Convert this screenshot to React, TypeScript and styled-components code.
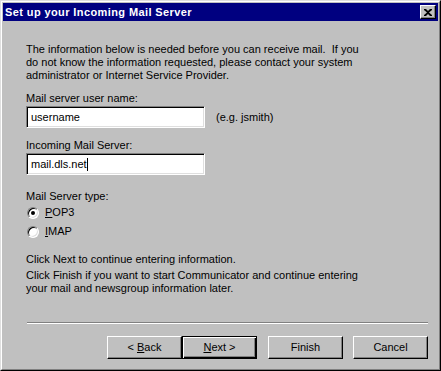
import React from 'react';
import styled, { createGlobalStyle } from 'styled-components';

const GlobalStyle = createGlobalStyle`
  html, body {
    margin: 0;
    padding: 0;
    background: #c0c0c0;
  }
  body {
    font-family: "Liberation Sans", Arial, sans-serif;
    font-size: 11px;
    color: #000;
  }
`;

const Window = styled.div`
  width: 441px;
  height: 371px;
  box-sizing: border-box;
  background: #c0c0c0;
  border-top: 1px solid #dfdfdf;
  border-left: 1px solid #dfdfdf;
  border-right: 1px solid #000;
  border-bottom: 1px solid #000;
  display: flex;
  flex-direction: column;
`;

const Frame = styled.div`
  flex: 1;
  display: flex;
  flex-direction: column;
  border-top: 1px solid #fff;
  border-left: 1px solid #fff;
  border-right: 1px solid #808080;
  border-bottom: 1px solid #808080;
  padding: 1px;
`;

const TitleBar = styled.div`
  height: 18px;
  background: #000080;
  display: flex;
  align-items: center;
  justify-content: space-between;
  padding: 0 2px;
`;

const Title = styled.span`
  color: #fff;
  font-weight: bold;
  font-size: 11px;
  letter-spacing: 0.4px;
`;

const CloseButton = styled.div`
  width: 16px;
  height: 14px;
  box-sizing: border-box;
  background: #c0c0c0;
  border-top: 1px solid #fff;
  border-left: 1px solid #fff;
  border-right: 1px solid #000;
  border-bottom: 1px solid #000;
  box-shadow: inset -1px -1px 0 #808080;
  display: flex;
  align-items: center;
  justify-content: center;
`;

const Body = styled.div`
  flex: 1;
  display: flex;
  flex-direction: column;
  padding: 22px 10px 0 23px;
  line-height: 13px;
`;

const Paragraph = styled.p<{ $top?: number }>`
  margin: ${(p) => p.$top ?? 0}px 0 0 0;
  white-space: nowrap;
`;

const Label = styled.div<{ $top: number }>`
  margin-top: ${(p) => p.$top}px;
`;

const FieldRow = styled.div`
  display: flex;
  align-items: center;
  gap: 11px;
  margin-top: 1px;
`;

const Field = styled.div`
  width: 179px;
  height: 22px;
  box-sizing: border-box;
  background: #fff;
  border-top: 1px solid #808080;
  border-left: 1px solid #808080;
  border-right: 1px solid #fff;
  border-bottom: 1px solid #fff;
  box-shadow: inset 1px 1px 0 #000, inset -1px -1px 0 #dfdfdf;
  padding: 4px 3px 0 4px;
  white-space: nowrap;
  display: flex;
  align-items: flex-start;
`;

const Caret = styled.span`
  display: inline-block;
  width: 1px;
  height: 13px;
  background: #000;
`;

const RadioRow = styled.div`
  display: flex;
  align-items: center;
  height: 19px;
  gap: 6px;
`;

const RadioCircle = styled.span<{ $checked?: boolean }>`
  width: 12px;
  height: 12px;
  box-sizing: border-box;
  border-radius: 50%;
  background: #fff;
  border: 1px solid;
  border-color: #808080 #fff #fff #808080;
  box-shadow: inset 1px 1px 0 #000, inset -1px -1px 0 #dfdfdf;
  display: flex;
  align-items: center;
  justify-content: center;
  margin-left: 1px;

  &::after {
    content: '';
    width: 4px;
    height: 4px;
    border-radius: 50%;
    background: ${(p) => (p.$checked ? '#000' : 'transparent')};
  }
`;

const Separator = styled.div`
  margin-top: 27px;
  margin-left: 1px;
  height: 0;
  border-top: 1px solid #808080;
  border-bottom: 1px solid #fff;
`;

const ButtonBar = styled.div`
  display: flex;
  justify-content: flex-end;
  margin-top: 12px;
`;

const Button = styled.div<{ $default?: boolean; $gap?: number }>`
  width: 75px;
  height: 23px;
  box-sizing: border-box;
  margin-left: ${(p) => p.$gap ?? 0}px;
  background: #c0c0c0;
  display: flex;
  align-items: center;
  justify-content: center;
  border: 1px solid;
  border-color: ${(p) => (p.$default ? '#000' : '#fff #000 #000 #fff')};
  box-shadow: ${(p) =>
    p.$default
      ? 'inset 1px 1px 0 #fff, inset -1px -1px 0 #000, inset -2px -2px 0 #808080'
      : 'inset -1px -1px 0 #808080'};
`;

const U = styled.span`
  text-decoration: underline;
`;

export default function App() {
  return (
    <>
      <GlobalStyle />
      <Window>
        <Frame>
          <TitleBar>
            <Title>Set up your Incoming Mail Server</Title>
            <CloseButton>
              <svg width="8" height="7" viewBox="0 0 8 7">
                <path d="M0 0h2l2 2 2-2h2v1L5 3.5 8 6v1H6L4 5 2 7H0V6l3-2.5L0 1z" fill="#000" />
              </svg>
            </CloseButton>
          </TitleBar>
          <Body>
            <Paragraph>
              The information below is needed before you can receive mail.&nbsp; If you
              <br />
              do not know the information requested, please contact your system
              <br />
              administrator or Internet Service Provider.
            </Paragraph>
            <Label $top={10}>Mail server user name:</Label>
            <FieldRow>
              <Field>username</Field>
              <span>(e.g. jsmith)</span>
            </FieldRow>
            <Label $top={11}>Incoming Mail Server:</Label>
            <FieldRow>
              <Field>
                mail.dls.net
                <Caret />
              </Field>
            </FieldRow>
            <Label $top={15}>Mail Server type:</Label>
            <RadioRow>
              <RadioCircle $checked />
              <span>
                <U>P</U>OP3
              </span>
            </RadioRow>
            <RadioRow>
              <RadioCircle />
              <span>
                <U>I</U>MAP
              </span>
            </RadioRow>
            <Paragraph $top={12}>Click Next to continue entering information.</Paragraph>
            <Paragraph $top={3}>
              Click Finish if you want to start Communicator and continue entering
              <br />
              your mail and newsgroup information later.
            </Paragraph>
            <Separator />
            <ButtonBar>
              <Button>
                &lt;&nbsp;<U>B</U>ack
              </Button>
              <Button $default>
                <U>N</U>ext &gt;
              </Button>
              <Button $gap={11}>Finish</Button>
              <Button $gap={10}>Cancel</Button>
            </ButtonBar>
          </Body>
        </Frame>
      </Window>
    </>
  );
}
